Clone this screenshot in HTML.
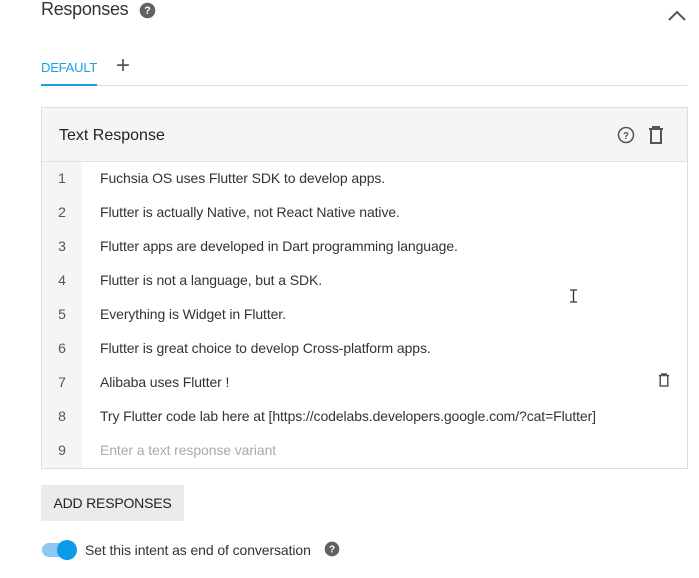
<!DOCTYPE html>
<html><head><style>
body{margin:0;width:699px;height:578px;background:#fff;font-family:"Liberation Sans",sans-serif;position:relative;overflow:hidden;color:#212121}
.a{position:absolute}
.row{position:absolute;left:0;height:34px;width:100%}
.num{position:absolute;left:0;width:40px;text-align:center;font-size:14px;color:#555;line-height:34px}
.txt{position:absolute;left:58px;font-size:14px;color:#333;line-height:34px;letter-spacing:-0.1px}
</style></head><body>
<div class="a" style="left:41px;top:-1px;font-size:18px;color:#333;letter-spacing:-0.3px">Responses</div>
<svg class="a" style="left:139px;top:2px" width="17" height="17" viewBox="0 0 24 24"><circle cx="12" cy="12" r="11" fill="#616161"/><text x="12" y="17" font-size="15" font-weight="bold" text-anchor="middle" fill="#fff" font-family="Liberation Sans">?</text></svg>
<svg class="a" style="left:667px;top:8px" width="20" height="14" viewBox="0 0 20 14"><path d="M2 12 L10 4 L18 12" stroke="#555" stroke-width="2" fill="none"/></svg>
<div class="a" style="left:41px;top:60px;font-size:13px;color:#1e9ee0;letter-spacing:-0.2px">DEFAULT</div>
<div class="a" style="left:116px;top:54px;font-size:24px;color:#555;line-height:24px">+</div>
<div class="a" style="left:41px;top:85px;width:646px;height:1px;background:#ddd"></div>
<div class="a" style="left:41px;top:84px;width:56px;height:2px;background:#1e9ee0"></div>
<div class="a" style="left:41px;top:107px;width:645px;height:360px;border:1px solid #ddd;background:#fff">
 <div class="a" style="left:0;top:0;width:645px;height:53px;background:#f5f5f5;border-bottom:1px solid #e3e3e3"></div>
 <div class="a" style="left:17px;top:19px;font-size:16px;color:#222">Text Response</div>
 <svg class="a" style="left:575px;top:18px" width="18" height="18" viewBox="0 0 24 24"><circle cx="12" cy="12" r="10" stroke="#555" stroke-width="2" fill="none"/><text x="12" y="17" font-size="13" text-anchor="middle" fill="#555" font-family="Liberation Sans" font-weight="bold">?</text></svg>
 <svg class="a" style="left:606px;top:18px" width="16" height="18" viewBox="0 0 16 18"><path d="M1 3h14M5 3V1h6v2M3 3v14h10V3" stroke="#555" stroke-width="2" fill="none"/></svg>
 <div class="a" style="left:0;top:54px;width:40px;height:306px;background:#f5f5f5"></div>
 <div class="a" style="left:0;top:53px;width:645px;height:306px">
  <div class="row" style="top:0"><div class="num">1</div><div class="txt">Fuchsia OS uses Flutter SDK to develop apps.</div></div>
  <div class="row" style="top:34px"><div class="num">2</div><div class="txt">Flutter is actually Native, not React Native native.</div></div>
  <div class="row" style="top:68px"><div class="num">3</div><div class="txt">Flutter apps are developed in Dart programming language.</div></div>
  <div class="row" style="top:102px"><div class="num">4</div><div class="txt">Flutter is not a language, but a SDK.</div></div>
  <div class="row" style="top:136px"><div class="num">5</div><div class="txt">Everything is Widget in Flutter.</div></div>
  <div class="row" style="top:170px"><div class="num">6</div><div class="txt">Flutter is great choice to develop Cross-platform apps.</div></div>
  <div class="row" style="top:204px"><div class="num">7</div><div class="txt">Alibaba uses Flutter !</div></div>
  <div class="row" style="top:238px"><div class="num">8</div><div class="txt">Try Flutter code lab here at [https://codelabs.developers.google.com/?cat=Flutter]</div></div>
  <div class="row" style="top:272px"><div class="num">9</div><div class="txt" style="color:#aaa">Enter a text response variant</div></div>
 </div>
 <svg class="a" style="left:616px;top:265px" width="12" height="14" viewBox="0 0 16 18"><path d="M1 3h14M5 3V1h6v2M3 3v14h10V3" stroke="#555" stroke-width="2" fill="none"/></svg>
</div>
<svg class="a" style="left:569px;top:289px" width="9" height="14" viewBox="0 0 9 14"><path d="M1 1h7M1 13h7M4.5 1v12" stroke="#333" stroke-width="1.3" fill="none"/></svg>
<div class="a" style="left:41px;top:485px;width:143px;height:36px;background:#ebebeb;font-size:14px;line-height:36px;text-align:center;color:#222;letter-spacing:-0.2px">ADD RESPONSES</div>
<div class="a" style="left:42px;top:543px;width:32px;height:14px;border-radius:7px;background:#8cc9f2"></div>
<div class="a" style="left:57px;top:540px;width:20px;height:20px;border-radius:50%;background:#0b9be8"></div>
<div class="a" style="left:85px;top:542px;font-size:14px;color:#333;letter-spacing:-0.1px">Set this intent as end of conversation</div>
<svg class="a" style="left:324px;top:541px" width="16" height="16" viewBox="0 0 24 24"><circle cx="12" cy="12" r="11" fill="#616161"/><text x="12" y="17" font-size="15" font-weight="bold" text-anchor="middle" fill="#fff" font-family="Liberation Sans">?</text></svg>
</body></html>
